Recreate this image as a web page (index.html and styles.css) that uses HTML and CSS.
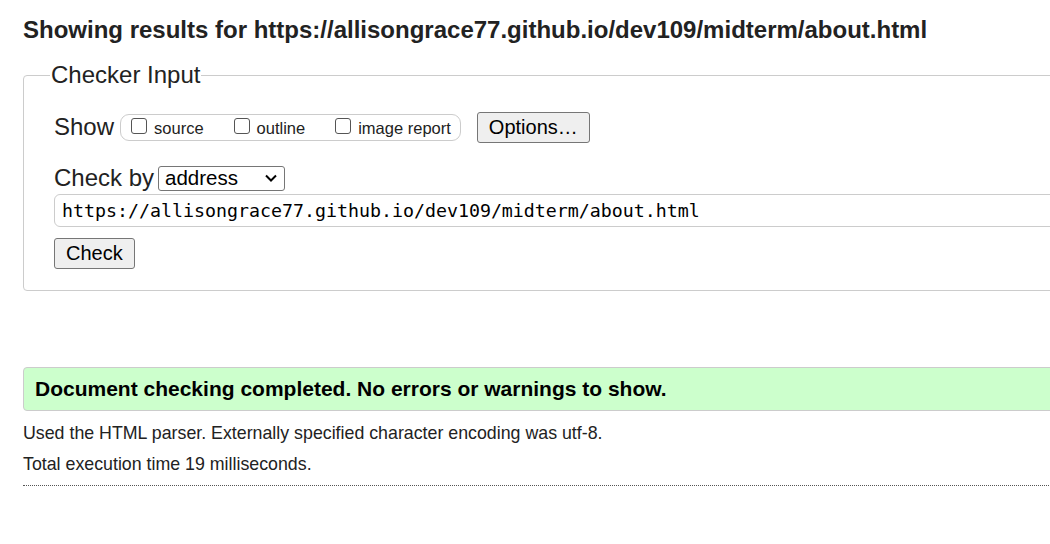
FILE: index.html
```html
<!DOCTYPE html>
<html>
<head>
<meta charset="utf-8">
<link rel="stylesheet" href="styles.css">
</head>
<body>
<div class="page">
  <h2 class="title">Showing results for https://allisongrace77.github.io/dev109/midterm/about.html</h2>
  <fieldset class="checker">
    <legend>Checker Input</legend>
    <div class="row show-row">
      <span class="lbl">Show</span>
      <span class="opts">
        <label class="opt"><span class="cb"></span>source</label>
        <label class="opt"><span class="cb"></span>outline</label>
        <label class="opt"><span class="cb"></span>image report</label>
      </span>
      <button class="btn opt-btn">Options…</button>
    </div>
    <div class="row by-row">
      <span class="lbl">Check by</span>
      <span class="select">address<svg class="chev" width="14" height="10" viewBox="0 0 14 10"><path d="M2 2.5 L7 7.5 L12 2.5" fill="none" stroke="#000" stroke-width="2"/></svg></span>
    </div>
    <div class="url">https://allisongrace77.github.io/dev109/midterm/about.html</div>
    <button class="btn check-btn">Check</button>
  </fieldset>
  <p class="success">Document checking completed. No errors or warnings to show.</p>
  <p class="info">Used the HTML parser. Externally specified character encoding was utf-8.</p>
  <p class="info">Total execution time 19 milliseconds.</p>
  <hr class="dots">
</div>
</body>
</html>
```
FILE: styles.css
```css
html, body { margin: 0; padding: 0; overflow: hidden; background: #fff; }
body { font-family: "Liberation Sans", Arial, sans-serif; color: #222; }
.page { padding-left: 23px; width: 1100px; }
.title { font-size: 24px; font-weight: bold; margin: 0; padding-top: 18px; line-height: 24px; color: #222; }
.checker {
  margin: 21px 0 0 0; padding: 0 0 21px 30px;
  border: 1px solid #ccc; border-radius: 4px;
}
.checker legend { font-size: 24px; padding: 0 1px; margin-left: -4px; color: #222; line-height: 24px; }
.row { display: flex; align-items: center; }
.show-row { margin-top: 23px; height: 34px; }
.lbl { font-size: 24px; margin-right: 5px; }
.opts {
  display: flex; align-items: center; height: 27px; box-sizing: border-box;
  border: 1px solid #ccc; border-radius: 9px; padding: 0 9px 0 10px; margin-left: 1px;
}
.opt { display: flex; align-items: center; font-size: 16.5px; margin-right: 30px; padding-top: 3px; }
.opt:last-child { margin-right: 0; }
.cb { width: 16px; height: 16px; border: 1px solid #555; border-radius: 3px; box-sizing: border-box; margin: 0 7px 6px 0; background: #fff; }
.btn {
  font-family: "Liberation Sans", Arial, sans-serif; font-size: 20px; color: #000;
  background: #efefef; border: 1px solid #767676; border-radius: 3px; padding: 0 11px; height: 31px;
}
.opt-btn { margin-left: 16px; }
.by-row { margin-top: 21px; height: 26px; }
.select {
  display: inline-flex; align-items: center; justify-content: space-between;
  width: 127px; height: 25px; box-sizing: border-box; border: 1px solid #767676; border-radius: 3px;
  font-size: 20.5px; padding: 0 6px 0 6px; margin-left: -1px; color: #000;
}
.url {
  margin-top: 3px; height: 33px; box-sizing: border-box; border: 1px solid #ccc; border-radius: 6px;
  font-family: "DejaVu Sans Mono", monospace; font-size: 18.27px; line-height: 31px; padding-left: 7px; color: #000;
  width: 1100px;
}
.check-btn { margin-top: 11px; padding: 0 11px; }
.success {
  margin: 76px 0 0 0; height: 44px; box-sizing: border-box; background: #ccffcc;
  border: 1px solid #ccc; border-radius: 4px; font-weight: bold; font-size: 21px;
  line-height: 42px; padding-left: 11px; color: #000;
}
.info { font-size: 17.8px; margin: 0; line-height: 20px; color: #222; }
.success + .info { margin-top: 12px; }
.info + .info { margin-top: 11px; }
.dots { border: 0; border-top: 1px dotted #555; margin: 11px 0 0 0; height: 0; }
```
